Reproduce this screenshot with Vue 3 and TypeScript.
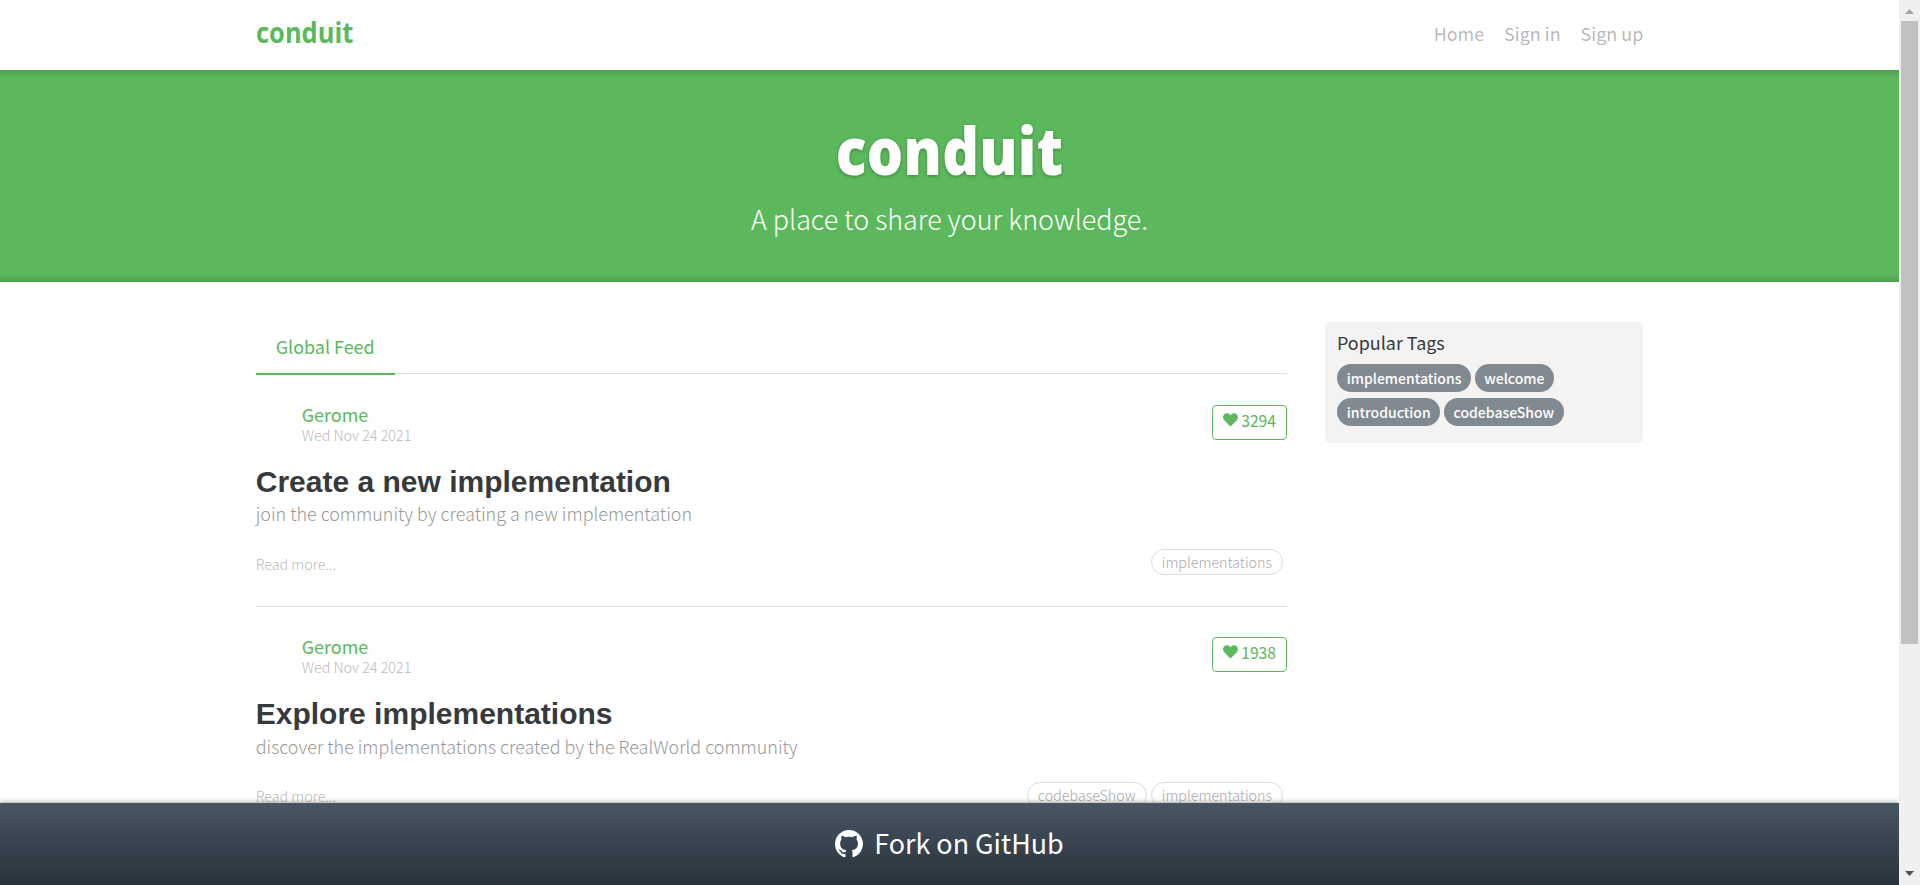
<script setup lang="ts">
interface Article {
  author: string
  date: string
  likes: number
  title: string
  description: string
  tags: string[]
}

const links: string[] = ['Home', 'Sign in', 'Sign up']
const popularTags: string[] = ['implementations', 'welcome', 'introduction', 'codebaseShow']
const articles: Article[] = [
  {
    author: 'Gerome',
    date: 'Wed Nov 24 2021',
    likes: 3294,
    title: 'Create a new implementation',
    description: 'join the community by creating a new implementation',
    tags: ['implementations'],
  },
  {
    author: 'Gerome',
    date: 'Wed Nov 24 2021',
    likes: 1938,
    title: 'Explore implementations',
    description: 'discover the implementations created by the RealWorld community',
    tags: ['codebaseShow', 'implementations'],
  },
]
</script>

<template>
  <div class="window">
    <div class="page">
      <nav class="navbar">
        <div class="container nav-inner">
          <a class="brand">conduit</a>
          <ul class="nav-links">
            <li v-for="link in links" :key="link">{{ link }}</li>
          </ul>
        </div>
      </nav>

      <header class="banner">
        <h1>conduit</h1>
        <p>A place to share your knowledge.</p>
      </header>

      <main class="container columns">
        <section class="feed">
          <div class="feed-toggle"><a class="tab">Global Feed</a></div>
          <article v-for="article in articles" :key="article.title" class="preview">
            <div class="meta">
              <div class="info">
                <a class="author">{{ article.author }}</a>
                <span class="date">{{ article.date }}</span>
              </div>
              <button class="like">
                <svg class="heart" viewBox="0 0 15 14">
                  <path d="M7.5 13.5 1.2 7.2C-.4 5.500-.3 2.700 1.300 1.200 3-.4 5.900-.1 7.500 2.200 9.100-.1 12-.4 13.700 1.200 15.300 2.700 15.400 5.500 13.800 7.200Z" />
                </svg>
                <span>{{ article.likes }}</span>
              </button>
            </div>
            <h2>{{ article.title }}</h2>
            <p class="description">{{ article.description }}</p>
            <div class="preview-foot">
              <span class="more">Read more...</span>
              <ul class="tags">
                <li v-for="tag in article.tags" :key="tag">{{ tag }}</li>
              </ul>
            </div>
          </article>
        </section>

        <aside class="sidebar">
          <p>Popular Tags</p>
          <div class="tag-list">
            <a v-for="tag in popularTags" :key="tag" class="pill">{{ tag }}</a>
          </div>
        </aside>
      </main>

      <footer class="fork">
        <svg class="github" viewBox="0 0 16 16">
          <path d="M8 0C3.580 0 0 3.580 0 8c0 3.540 2.290 6.530 5.470 7.590.4.070.55-.17.55-.38 0-.19-.01-.82-.01-1.490-2.010.37-2.530-.49-2.690-.94-.09-.23-.48-.94-.82-1.130-.28-.15-.68-.52-.01-.53.63-.01 1.080.58 1.230.82.72 1.210 1.870.87 2.330.66.07-.52.28-.87.51-1.070-1.780-.2-3.640-.89-3.640-3.950 0-.87.31-1.590.82-2.150-.08-.2-.36-1.020.08-2.120 0 0 .67-.21 2.200.82.64-.18 1.320-.27 2-.27s1.360.09 2 .27c1.530-1.040 2.200-.82 2.200-.82.44 1.100.16 1.920.08 2.120.51.56.82 1.270.82 2.150 0 3.070-1.870 3.750-3.650 3.950.29.25.54.73.54 1.480 0 1.070-.01 1.930-.01 2.200 0 .21.15.46.55.38A8.010 8.010 0 0 0 16 8c0-4.420-3.580-8-8-8Z" />
        </svg>
        <span>Fork on GitHub</span>
      </footer>
    </div>

    <div class="scrollbar">
      <svg class="arrow up" viewBox="0 0 9 5"><path d="M0 5 4.500 0 9 5Z" /></svg>
      <div class="thumb"></div>
      <svg class="arrow down" viewBox="0 0 9 5"><path d="M0 0h9L4.500 5Z" /></svg>
    </div>
  </div>
</template>

<style>
html,
body {
  overflow: hidden;
}
</style>

<style scoped>
.window {
  display: flex;
  width: 1920px;
  height: 885px;
  overflow: hidden;
  background: #fff;
  color: #373a3c;
  font-family: 'Noto Sans CJK SC', sans-serif;
  font-size: 17.93px;
  line-height: 30px;
}
.page {
  position: relative;
  width: 1899px;
  overflow: hidden;
}
h1,
h2,
p,
ul {
  margin: 0;
  padding: 0;
}
ul {
  list-style: none;
}
.container {
  box-sizing: border-box;
  width: 1425px;
  margin: 0 auto;
  padding: 0 18.75px;
}
.navbar {
  height: 70px;
}
.nav-inner {
  display: flex;
  justify-content: space-between;
}
.brand {
  padding-top: 14px;
  color: #5cb85c;
  font-family: 'Open Sans', sans-serif;
  font-size: 28px;
  font-weight: 700;
  line-height: 36px;
  transform: scaleX(0.91);
  transform-origin: left;
}
.nav-links {
  display: flex;
  gap: 20px;
  padding-top: 18px;
  color: rgba(0, 0, 0, 0.3);
}
.banner {
  box-sizing: border-box;
  height: 212px;
  padding: 40px 0;
  background: #5cb85c;
  box-shadow: inset 0 10px 10px -10px rgba(0, 0, 0, 0.3), inset 0 -10px 10px -10px rgba(0, 0, 0, 0.3);
  color: #fff;
  text-align: center;
}
.banner h1 {
  margin-bottom: 7px;
  padding-top: 2px;
  font-family: 'Open Sans', sans-serif;
  font-size: 65px;
  font-weight: 800;
  line-height: 77px;
  letter-spacing: 0.3px;
  text-shadow: 0 1px 4px rgba(0, 0, 0, 0.3);
  transform: scaleX(0.88);
}
.banner p {
  font-size: 26.9px;
  font-weight: 300;
  line-height: 45px;
}
.columns {
  display: flex;
  align-items: flex-start;
  justify-content: space-between;
  padding-top: 40px;
}
.feed {
  width: 1031.25px;
}
.feed-toggle {
  display: flex;
  height: 51.3px;
}
.tab {
  z-index: 1;
  height: 30px;
  padding: 9px 20.5px 12px 20px;
  border-bottom: 2px solid #5cb85c;
  color: #5cb85c;
}
.preview {
  box-sizing: border-box;
  height: 232.4px;
  padding-top: 30.4px;
  border-top: 1px solid rgba(0, 0, 0, 0.12);
}
.meta {
  display: flex;
  justify-content: space-between;
  height: 60.4px;
}
.info {
  display: flex;
  flex-direction: column;
  padding-left: 46px;
}
.author {
  height: 21px;
  margin-top: -1px;
  color: #5cb85c;
  line-height: 20px;
}
.date {
  color: #bbb;
  font-size: 14.3px;
  font-weight: 300;
  line-height: 20px;
}
.like {
  box-sizing: border-box;
  display: flex;
  gap: 3px;
  height: 35px;
  padding: 0 10px;
  border: 1px solid #5cb85c;
  border-radius: 4px;
  background: none;
  color: #5cb85c;
  font-family: inherit;
  font-size: 15.7px;
  line-height: 30px;
}
.heart {
  width: 15px;
  height: 14px;
  margin-top: 7px;
  fill: #5cb85c;
}
h2 {
  font-family: 'Liberation Sans', Arial, sans-serif;
  font-size: 30px;
  font-weight: 700;
  line-height: 33px;
}
.description {
  padding-top: 3.3px;
  color: #999;
  font-weight: 300;
  line-height: 24px;
}
.preview-foot {
  display: flex;
  justify-content: space-between;
  padding-top: 23.2px;
  font-size: 14.3px;
  font-weight: 300;
}
.more {
  color: #bbb;
  line-height: 29px;
}
.tags {
  display: flex;
  gap: 4px;
  padding: 0.6px 4px 0 0;
  color: #aaa;
}
.tags li {
  height: 24px;
  padding: 0 10px;
  border: 1px solid #ddd;
  border-radius: 13px;
  line-height: 23.6px;
}
.sidebar {
  box-sizing: border-box;
  width: 318.75px;
  height: 121px;
  padding: 5px 12.5px 0;
  border-radius: 5px;
  background: #f3f3f3;
}
.sidebar p {
  margin-bottom: 7px;
}
.tag-list {
  display: flex;
  flex-wrap: wrap;
  gap: 6px 3.5px;
}
.pill {
  height: 28px;
  padding: 0 9.7px;
  border-radius: 14px;
  background: #818a91;
  color: #fff;
  font-size: 14px;
  font-weight: 500;
  line-height: 28px;
}
.fork {
  position: absolute;
  right: 0;
  bottom: 0;
  left: 0;
  z-index: 2;
  display: flex;
  align-items: center;
  justify-content: center;
  gap: 11px;
  height: 82px;
  background: linear-gradient(#485563, #29323c);
  box-shadow: 0 0 5px rgba(0, 0, 0, 0.5);
  color: #fff;
  font-size: 26.9px;
}
.fork span {
  padding-bottom: 2px;
}
.github {
  width: 28px;
  height: 28px;
  fill: #fff;
}
.scrollbar {
  display: flex;
  flex-direction: column;
  align-items: center;
  width: 21px;
  background: #f0f0f0;
}
.arrow {
  width: 9px;
  height: 5px;
}
.up {
  margin: 9px 0 7px;
  fill: #a3a3a3;
}
.thumb {
  width: 17px;
  height: 623px;
  background: #c1c1c1;
}
.down {
  margin-top: 227px;
  fill: #505050;
}
</style>
